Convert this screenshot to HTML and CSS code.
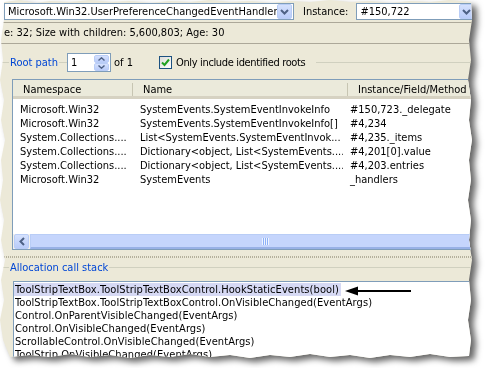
FILE: index.html
```html
<!DOCTYPE html>
<html lang="en">
<head>
    <meta charset="UTF-8">
    <title>Allocation profiler - root path</title>
    <link rel="stylesheet" href="styles.css">
</head>
<body>
    <div class="shot">
        <div class="window">
            <div class="topbar">
                <div class="combo combo-type">
                    <span class="combo-text">Microsoft.Win32.UserPreferenceChangedEventHandler</span>
                    <span class="drop"><svg width="9" height="6" viewBox="0 0 9 6"><path d="M1 1 L4.5 4.5 L8 1" fill="none" stroke="#4d6185" stroke-width="2"/></svg></span>
                </div>
                <span class="label">Instance:</span>
                <div class="combo combo-instance">
                    <span class="combo-text">#150,722</span>
                    <span class="drop"><svg width="9" height="6" viewBox="0 0 9 6"><path d="M1 1 L4.5 4.5 L8 1" fill="none" stroke="#4d6185" stroke-width="2"/></svg></span>
                </div>
            </div>

            <div class="status">e: 32; Size with children: 5,600,803; Age: 30</div>

            <div class="group-head root-head">
                <span class="gline lead"></span>
                <span class="gtitle">Root path</span>
                <span class="gline link"></span>
                <div class="spin">
                    <span class="spin-val">1</span>
                    <span class="spin-btns">
                        <span class="spin-btn"><svg width="7" height="4" viewBox="0 0 7 4"><path d="M0.5 3.5 L3.5 0.8 L6.5 3.5" fill="none" stroke="#4d6185" stroke-width="1.4"/></svg></span>
                        <span class="spin-btn"><svg width="7" height="4" viewBox="0 0 7 4"><path d="M0.5 0.5 L3.5 3.2 L6.5 0.5" fill="none" stroke="#4d6185" stroke-width="1.4"/></svg></span>
                    </span>
                </div>
                <span class="of">of 1</span>
                <label class="check">
                    <span class="box"><svg width="9" height="9" viewBox="0 0 9 9"><path d="M1 4.5 L3.5 7 L8 1.5" fill="none" stroke="#21a121" stroke-width="2"/></svg></span>
                    <span class="check-text">Only include identified roots</span>
                </label>
                <span class="gline fill"></span>
            </div>

            <div class="listview">
                <div class="lv-head">
                    <span class="hcell">Namespace</span>
                    <span class="hcell">Name</span>
                    <span class="hcell">Instance/Field/Method</span>
                </div>
                <div class="lv-body">
                    <div class="lv-row"><span>Microsoft.Win32</span><span>SystemEvents.SystemEventInvokeInfo</span><span>#150,723._delegate</span></div>
                    <div class="lv-row"><span>Microsoft.Win32</span><span>SystemEvents.SystemEventInvokeInfo[]</span><span>#4,234</span></div>
                    <div class="lv-row"><span>System.Collections....</span><span>List&lt;SystemEvents.SystemEventInvok...</span><span>#4,235._items</span></div>
                    <div class="lv-row"><span>System.Collections....</span><span>Dictionary&lt;object, List&lt;SystemEvents....</span><span>#4,201[0].value</span></div>
                    <div class="lv-row"><span>System.Collections....</span><span>Dictionary&lt;object, List&lt;SystemEvents....</span><span>#4,203.entries</span></div>
                    <div class="lv-row"><span>Microsoft.Win32</span><span>SystemEvents</span><span>_handlers</span></div>
                </div>
                <div class="hscroll">
                    <span class="sb-btn"><svg width="6" height="9" viewBox="0 0 6 9"><path d="M5 1 L1.5 4.5 L5 8" fill="none" stroke="#4d6185" stroke-width="2"/></svg></span>
                    <span class="sb-thumb"><span class="grip"></span></span>
                </div>
            </div>

            <div class="splitter"></div>

            <div class="group-head stack-head">
                <span class="gline lead"></span>
                <span class="gtitle">Allocation call stack</span>
                <span class="gline fill"></span>
            </div>

            <div class="stack">
                <div class="stack-row selected">ToolStripTextBox.ToolStripTextBoxControl.HookStaticEvents(bool)</div>
                <div class="stack-row">ToolStripTextBox.ToolStripTextBoxControl.OnVisibleChanged(EventArgs)</div>
                <div class="stack-row">Control.OnParentVisibleChanged(EventArgs)</div>
                <div class="stack-row">Control.OnVisibleChanged(EventArgs)</div>
                <div class="stack-row">ScrollableControl.OnVisibleChanged(EventArgs)</div>
                <div class="stack-row">ToolStrip.OnVisibleChanged(EventArgs)</div>
            </div>

            <svg class="arrow" width="70" height="12" viewBox="0 0 70 12">
                <path d="M10 6 L66 6" stroke="#000" stroke-width="2"/>
                <path d="M0 6 L13 1.5 L13 10.5 Z" fill="#000"/>
            </svg>
        </div>
    </div>
</body>
</html>
```

FILE: styles.css
```css
body {
    margin: 0;
    background: #fff;
    font-family: 'DejaVu Sans Condensed', 'DejaVu Sans', sans-serif;
    font-size: 11px;
    color: #000;
}
.shot {
    width: 485px;
    height: 368px;
    overflow: hidden;
    filter: drop-shadow(5px 4px 3px rgba(0,0,0,0.6));
}
.window {
    position: relative;
    width: 484px;
    height: 362px;
    background-color: #ece9d8;
    overflow: hidden;
    clip-path: polygon(4px 2px, 20px 0, 35px 3px, 50px 1px, 70px 2px, 90px 0, 110px 2px, 130px 1px, 150px 3px, 170px 1px, 190px 2px, 210px 0, 230px 2px, 250px 1px, 270px 3px, 290px 1px, 310px 2px, 330px 0, 350px 2px, 370px 1px, 390px 3px, 410px 1px, 430px 2px, 450px 0, 471px 2px,
        472px 20px, 469px 40px, 471px 60px, 468px 80px, 471px 100px, 469px 120px, 472px 140px, 469px 160px, 471px 180px, 468px 200px, 471px 220px, 469px 240px, 472px 260px, 469px 280px, 471px 300px, 468px 320px, 471px 340px, 469px 356px,
        450px 357px, 430px 354px, 410px 357px, 390px 355px, 370px 358px, 350px 355px, 330px 357px, 310px 354px, 290px 357px, 270px 355px, 250px 358px, 230px 355px, 210px 357px, 190px 354px, 170px 357px, 150px 355px, 130px 358px, 110px 355px, 90px 357px, 70px 354px, 50px 357px, 30px 355px, 10px 357px,
        3px 340px, 0 320px, 4px 300px, 1px 280px, 5px 260px, 1px 240px, 4px 220px, 0 200px, 3px 180px, 1px 160px, 5px 140px, 1px 120px, 4px 100px, 0 80px, 3px 60px, 1px 40px, 4px 20px);
}

/* top row with the two combos */
.topbar {
    display: flex;
    align-items: flex-start;
    padding-left: 4px;
    border-bottom: 1px solid #aca899;
    box-sizing: border-box;
    height: 23px;
}
.combo {
    margin-top: 3px;
    height: 17px;
    box-sizing: border-box;
    border: 1px solid #7f9db9;
    background: #fff;
    display: flex;
    align-items: center;
}
.combo-type { width: 290px; }
.combo-instance { width: 120px; }
.combo-text {
    flex: 1;
    padding-left: 3px;
    white-space: nowrap;
    overflow: hidden;
}
.drop {
    width: 13px;
    height: 13px;
    margin-right: 1px;
    border: 1px solid #b9cdf6;
    border-radius: 2px;
    background: linear-gradient(#d5e1fd, #b9ccf9);
    display: flex;
    align-items: center;
    justify-content: center;
}
.label {
    margin: 5px 8px 0 9px;
}

.status {
    height: 21px;
    box-sizing: border-box;
    border-bottom: 1px solid #aca899;
    padding: 3px 0 0 4px;
    white-space: nowrap;
}

/* group box headings */
.group-head {
    display: flex;
    align-items: center;
    white-space: nowrap;
}
.gline {
    height: 1px;
    background: #d0d0bf;
}
.gline.lead { width: 9px; }
.gline.link { width: 8px; }
.gline.fill { flex: 1; }
.gtitle {
    color: #0046d5;
    padding: 0 1px;
}
.root-head {
    margin-top: 9px;
    height: 19px;
}
.spin {
    width: 44px;
    height: 19px;
    box-sizing: border-box;
    border: 1px solid #7f9db9;
    background: #fff;
    display: flex;
    align-items: center;
}
.spin-val {
    flex: 1;
    padding-left: 3px;
}
.spin-btns {
    display: flex;
    flex-direction: column;
    margin-right: 1px;
}
.spin-btn {
    width: 15px;
    height: 8px;
    box-sizing: border-box;
    border: 1px solid #b9cdf6;
    border-radius: 2px;
    background: linear-gradient(#d5e1fd, #b9ccf9);
    display: flex;
    align-items: center;
    justify-content: center;
}
.of {
    margin-left: 3px;
    margin-right: 26px;
}
.check {
    display: flex;
    align-items: center;
    margin-right: 11px;
}
.check-text {
    letter-spacing: -0.35px;
}
.box {
    width: 13px;
    height: 13px;
    box-sizing: border-box;
    border: 1px solid #1c5180;
    background: linear-gradient(135deg, #dcdcd7, #fff);
    display: flex;
    align-items: center;
    justify-content: center;
    margin-right: 4px;
}

/* list view */
.listview {
    margin: 7px 0 0 12px;
    width: 480px;
    border: 1px solid #7f9db9;
    background: #fff;
}
.lv-head {
    display: grid;
    grid-template-columns: 120px 215px 1fr;
    height: 19px;
    box-sizing: border-box;
    background: #ebeadb;
    border-bottom: 3px solid #d6d2c2;
}
.hcell {
    padding-left: 10px;
    border-right: 1px solid #c7c5b2;
    margin-top: 3px;
}
.lv-body {
    height: 135px;
    padding-top: 4px;
    box-sizing: border-box;
}
.lv-row {
    display: grid;
    grid-template-columns: 120px 210px 1fr;
    height: 14px;
    line-height: 14px;
    white-space: nowrap;
}
.lv-row span {
    padding-left: 7px;
    overflow: hidden;
}
.hscroll {
    display: flex;
    height: 15px;
    padding: 0 1px;
    background: #f3f1ec;
}
.sb-btn {
    width: 15px;
    box-sizing: border-box;
    border: 1px solid #b9cdf6;
    border-radius: 2px;
    background: linear-gradient(#d5e1fd, #b9ccf9);
    display: flex;
    align-items: center;
    justify-content: center;
}
.sb-thumb {
    flex: 1;
    margin-left: 1px;
    box-sizing: border-box;
    border: 1px solid #b9cdf6;
    border-bottom: 2px solid #98b1e6;
    background: #c5d5fc;
    position: relative;
}
.grip {
    position: absolute;
    left: 231px;
    top: 3px;
    width: 7px;
    height: 7px;
    background: repeating-linear-gradient(90deg, #eef4fe 0 1px, #8cb0f8 1px 2px);
}

.splitter {
    margin: 6px 0 0 0;
    height: 2px;
    background: repeating-linear-gradient(90deg, #b4b09c 0 1px, #ece9d8 1px 2px);
}

.stack-head {
    margin-top: 2px;
    height: 14px;
}
.stack {
    margin: 7px 0 0 13px;
    width: 470px;
    height: 100px;
    border: 1px solid #7f9db9;
    background: #fff;
    padding-top: 1px;
}
.stack-row {
    height: 13px;
    line-height: 13px;
    white-space: nowrap;
    padding-left: 1px;
    letter-spacing: 0.08px;
}
.stack-row.selected {
    display: inline-block;
    background: #d6d9f4;
    padding-right: 2px;
}
.arrow {
    position: absolute;
    left: 345px;
    top: 285px;
}
```
